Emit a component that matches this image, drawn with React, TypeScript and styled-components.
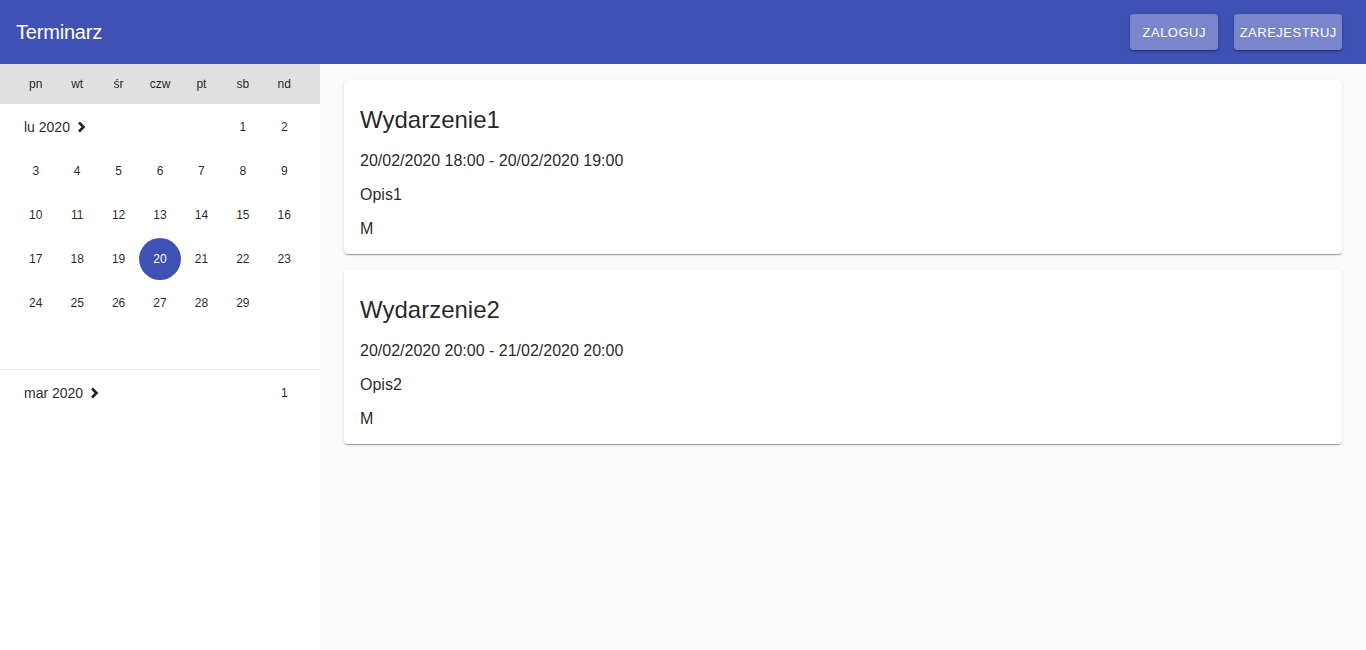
import styled, { createGlobalStyle } from "styled-components";

const GlobalStyle = createGlobalStyle`
  html, body {
    margin: 0;
    padding: 0;
    height: 100%;
  }
  body {
    font-family: "Liberation Sans", Arial, sans-serif;
    background-color: #fafafa;
    color: rgba(0, 0, 0, 0.87);
  }
  #root {
    height: 100%;
  }
`;

const Page = styled.div`
  display: flex;
  flex-direction: column;
  height: 650px;
  overflow: hidden;
`;

const AppBar = styled.header`
  display: flex;
  align-items: center;
  height: 64px;
  padding: 0 24px 0 16px;
  background-color: #3f51b5;
  flex-shrink: 0;
`;

const Title = styled.div`
  flex: 1;
  color: #fff;
  font-size: 20px;
  letter-spacing: -0.2px;
`;

const Actions = styled.div`
  display: flex;
  gap: 16px;
`;

const BarButton = styled.button<{ $width: number }>`
  width: ${(p) => p.$width}px;
  height: 36px;
  padding: 0 0 0 0.5px;
  border: none;
  border-radius: 4px;
  background-color: #7986cb;
  color: #fff;
  font-family: "Liberation Sans", Arial, sans-serif;
  font-size: 13px;
  letter-spacing: 0.5px;
  text-align: center;
  box-shadow: 0 3px 1px -2px rgba(0, 0, 0, 0.2), 0 2px 2px 0 rgba(0, 0, 0, 0.14),
    0 1px 5px 0 rgba(0, 0, 0, 0.12);
`;

const Body = styled.div`
  display: flex;
  flex: 1;
  min-height: 0;
`;

const Sidebar = styled.aside`
  width: 320px;
  flex-shrink: 0;
  background-color: #fff;
  display: flex;
  flex-direction: column;
`;

const WeekHeader = styled.div`
  display: grid;
  grid-template-columns: repeat(7, minmax(0, 1fr));
  height: 40px;
  align-items: center;
  padding: 0 15px;
  background-color: #e0e0e0;
  font-size: 12px;
  color: rgba(0, 0, 0, 0.87);
  text-align: center;
`;

const Month = styled.div<{ $last?: boolean }>`
  display: grid;
  grid-template-columns: repeat(7, minmax(0, 1fr));
  grid-auto-rows: 44px;
  padding: 1px 15px 0;
  border-bottom: ${(p) => (p.$last ? "none" : "1px solid #eeeeee")};
`;

const MonthLabel = styled.div<{ $span: number }>`
  grid-column: 1 / span ${(p) => p.$span};
  display: flex;
  align-items: center;
  padding-left: 9px;
  font-size: 14px;
  color: rgba(0, 0, 0, 0.87);

  svg {
    margin-left: 7px;
  }
`;

const DayCell = styled.div`
  display: flex;
  align-items: center;
  justify-content: center;
  font-size: 12px;
  color: rgba(0, 0, 0, 0.87);
`;

const Day = styled.span<{ $selected?: boolean }>`
  display: flex;
  align-items: center;
  justify-content: center;
  flex-shrink: 0;
  width: 42px;
  height: 42px;
  border-radius: 50%;
  background-color: ${(p) => (p.$selected ? "#3f51b5" : "transparent")};
  color: ${(p) => (p.$selected ? "#fff" : "inherit")};
`;

const Content = styled.main`
  flex: 1;
  padding: 16px 24px;
  display: flex;
  flex-direction: column;
  gap: 16px;
  background-color: #fafafa;
`;

const Card = styled.div`
  background-color: #fff;
  border-radius: 4px;
  padding: 24px 16px 13px;
  box-shadow: 0 2px 1px -1px rgba(0, 0, 0, 0.2), 0 1px 1px 0 rgba(0, 0, 0, 0.14),
    0 1px 3px 0 rgba(0, 0, 0, 0.12);
`;

const CardTitle = styled.div`
  font-size: 24px;
  line-height: 32px;
  margin-bottom: 13px;
  color: rgba(0, 0, 0, 0.87);
`;

const CardLine = styled.div`
  font-size: 16px;
  line-height: 24px;
  color: rgba(0, 0, 0, 0.87);
  & + & {
    margin-top: 10px;
  }
`;

const Chevron = () => (
  <svg width="9" height="12" viewBox="0 0 9 12">
    <path
      d="M2 1.5 L6.5 6 L2 10.5"
      fill="none"
      stroke="rgba(0,0,0,0.87)"
      strokeWidth="2.6"
    />
  </svg>
);

const weekdays = ["pn", "wt", "śr", "czw", "pt", "sb", "nd"];

interface MonthData {
  label: string;
  offset: number;
  days: number;
  rows: number;
}

const months: MonthData[] = [
  { label: "lu 2020", offset: 5, days: 29, rows: 6 },
  { label: "mar 2020", offset: 6, days: 1, rows: 1 },
];

const SELECTED = "lu 2020-20";

const MonthBlock = ({ m, last }: { m: MonthData; last?: boolean }) => {
  const cells = [];
  for (let d = 1; d <= m.days; d++) {
    cells.push(
      <DayCell key={d}>
        <Day $selected={`${m.label}-${d}` === SELECTED}>{d}</Day>
      </DayCell>
    );
  }
  const filled = m.offset + m.days;
  const pad = m.rows * 7 - filled;
  for (let i = 0; i < pad; i++) cells.push(<DayCell key={"p" + i} />);
  return (
    <Month $last={last}>
      <MonthLabel $span={m.offset}>
        {m.label}
        <Chevron />
      </MonthLabel>
      {cells}
    </Month>
  );
};

const events = [
  { title: "Wydarzenie1", time: "20/02/2020 18:00 - 20/02/2020 19:00", desc: "Opis1", owner: "M" },
  { title: "Wydarzenie2", time: "20/02/2020 20:00 - 21/02/2020 20:00", desc: "Opis2", owner: "M" },
];

export default function App() {
  return (
    <Page>
      <GlobalStyle />
      <AppBar>
        <Title>Terminarz</Title>
        <Actions>
          <BarButton $width={88}>ZALOGUJ</BarButton>
          <BarButton $width={108}>ZAREJESTRUJ</BarButton>
        </Actions>
      </AppBar>
      <Body>
        <Sidebar>
          <WeekHeader>
            {weekdays.map((w) => (
              <span key={w}>{w}</span>
            ))}
          </WeekHeader>
          {months.map((m, i) => (
            <MonthBlock key={m.label} m={m} last={i === months.length - 1} />
          ))}
        </Sidebar>
        <Content>
          {events.map((e) => (
            <Card key={e.title}>
              <CardTitle>{e.title}</CardTitle>
              <CardLine>{e.time}</CardLine>
              <CardLine>{e.desc}</CardLine>
              <CardLine>{e.owner}</CardLine>
            </Card>
          ))}
        </Content>
      </Body>
    </Page>
  );
}
